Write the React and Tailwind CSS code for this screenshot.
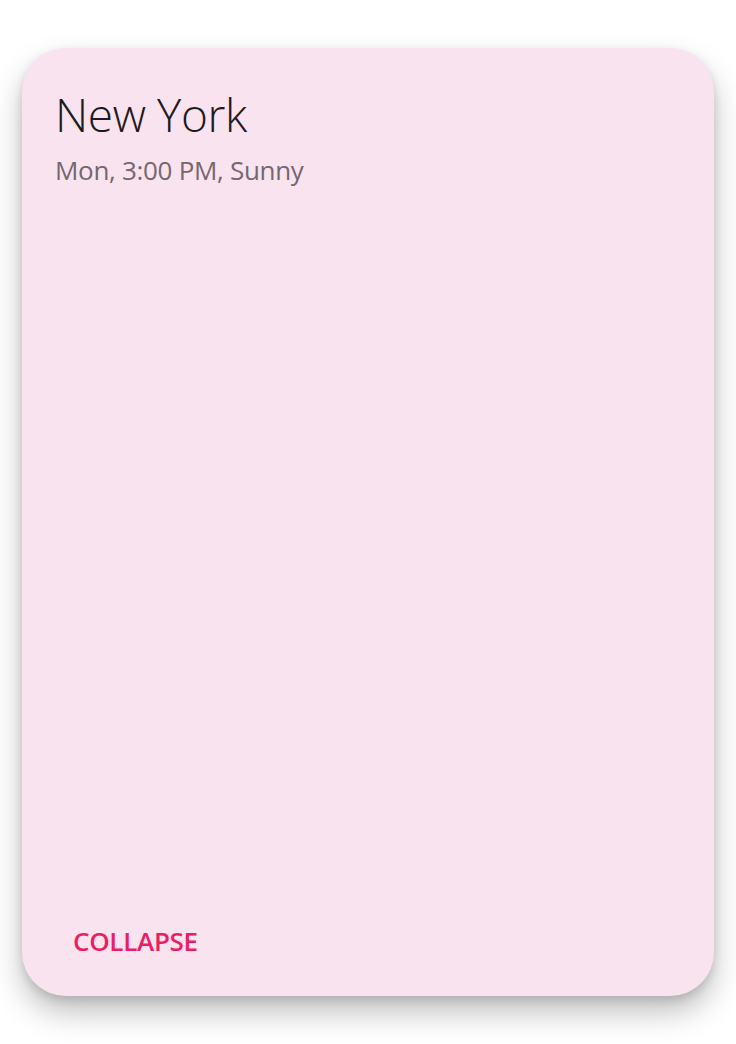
import React from "react";

export default function App() {
  return (
    <div className="min-h-screen w-full bg-white px-[22px] pt-[48px] pb-[48px] font-['Open_Sans',sans-serif]">
      {/* Card */}
      <div className="flex h-[948px] w-[692px] flex-col justify-between rounded-[44px] bg-[#f9e3ef] shadow-[0_16px_30px_rgba(0,0,0,0.25),0_4px_10px_rgba(0,0,0,0.12)]">
        <div className="px-[33px] pt-[38px]">
          <h1 className="text-[46px] leading-[56px] font-light tracking-[-0.4px] text-[#1f1a1d]">
            New York
          </h1>
          <p className="mt-[12px] text-[26px] leading-[32px] text-[#74676e] tracking-[-0.3px]">
            Mon, 3:00 PM, Sunny
          </p>
        </div>
        <div className="px-[51px] pb-[39px]">
          <button className="text-[26px] leading-[32px] font-semibold tracking-[-0.3px] text-[#e91e63]">
            COLLAPSE
          </button>
        </div>
      </div>
    </div>
  );
}
